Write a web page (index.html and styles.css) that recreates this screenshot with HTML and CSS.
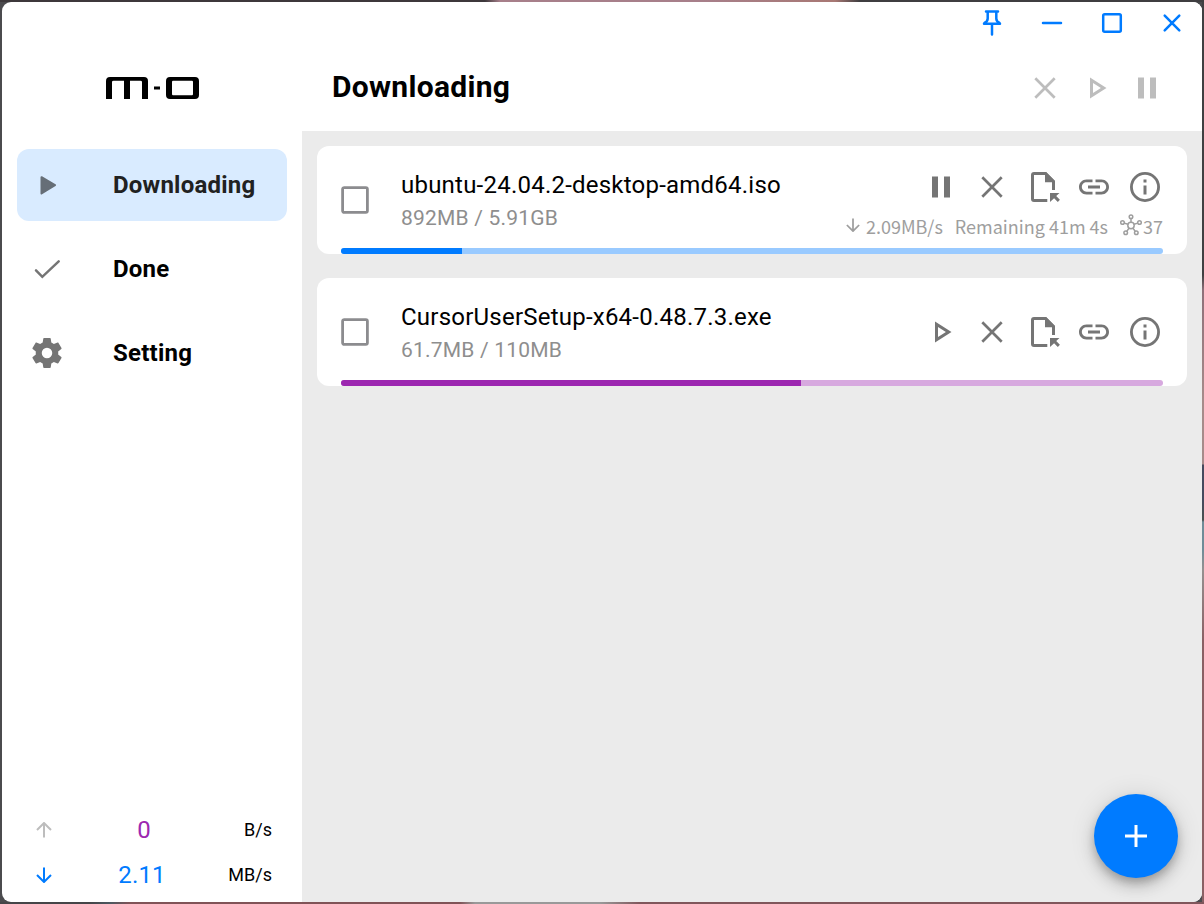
FILE: index.html
```
<!DOCTYPE html>
<html lang="en">
<head>
<meta charset="utf-8">
<title>m-o</title>
<link rel="stylesheet" href="styles.css">
</head>
<body>
<svg class="defs" aria-hidden="true">
  <symbol id="close" viewBox="0 0 36 36"><path d="M8.3 8.3 27.7 27.7M27.7 8.3 8.3 27.7" fill="none" stroke="currentColor" stroke-width="2.7"/></symbol>
  <symbol id="play" viewBox="0 0 24 24"><path d="M10 8.64 15.27 12 10 15.36V8.64M8 5v14l11-7L8 5z"/></symbol>
  <symbol id="pause" viewBox="0 0 24 24"><path d="M14 19h4V5h-4M6 19h4V5H6v14z"/></symbol>
  <symbol id="file" viewBox="0 0 36 36"><path d="M22.3 31.5H9a1.5 1.5 0 0 1-1.5-1.500V6A1.500 1.500 0 0 1 9 4.500H20.500L28.500 12.500V21" fill="none" stroke="currentColor" stroke-width="3"/><path d="M20 4v9.200h10v-1.200L21 3z"/><path d="M25 24h9.500l-3.300 3.100 3.700 3.700-2.100 2.100-3.700-3.700L25 33z"/></symbol>
  <symbol id="link" viewBox="0 0 24 24"><path d="M3.9 12c0-1.71 1.39-3.1 3.1-3.1h4V7H7c-2.760 0-5 2.240-5 5s2.240 5 5 5h4v-1.900H7c-1.710 0-3.100-1.390-3.100-3.100zM8 13h8v-2H8v2zm9-6h-4v1.900h4c1.710 0 3.100 1.390 3.100 3.100s-1.390 3.100-3.100 3.100h-4V17h4c2.760 0 5-2.240 5-5s-2.240-5-5-5z"/></symbol>
  <symbol id="info" viewBox="0 0 24 24"><circle cx="12" cy="12" r="9.050" fill="none" stroke="currentColor" stroke-width="1.900"/><path d="M11 7h2v2h-2zM11 11h2v6h-2z"/></symbol>
  <symbol id="down" viewBox="0 0 16 16"><path d="M8 .5v14M1 8l7 7 7-7" fill="none" stroke="currentColor" stroke-width="2"/></symbol>
</svg>
<div class="window">
  <aside class="sidebar">
    <div class="brand">
      <svg class="logo" viewBox="0 0 94 22"><path d="M0 22V4Q0 0 4 0H38Q42 0 42 4V22H36V5Q36 3.800 34.500 3.800H24V22H18V3.800H7.500Q6 3.800 6 5V22z"/><path d="M48 9.500h6v3h-6z"/><path fill-rule="evenodd" d="M64 0H89Q93 0 93 4V18Q93 22 89 22H64Q60 22 60 18V4Q60 0 64 0M67 3.800Q66 3.800 66 5V17Q66 18.200 67 18.200H86Q87 18.200 87 17V5Q87 3.800 86 3.800z"/></svg>
    </div>
    <nav class="nav">
      <a class="nav-item active"><svg class="nav-icon" viewBox="0 0 36 36"><path d="M12.500 10.200 26 18.200 12.500 26.500z" fill="currentColor" stroke="currentColor" stroke-width="2" stroke-linejoin="round"/></svg><span>Downloading</span></a>
      <a class="nav-item"><svg class="nav-icon" viewBox="0 0 36 36"><path d="M7 19.300 13.300 25.800 29.700 10.300" fill="none" stroke="currentColor" stroke-width="2.500" stroke-linecap="round"/></svg><span>Done</span></a>
      <a class="nav-item"><svg class="nav-icon" viewBox="0 0 24 24"><path d="M12 15.500A3.500 3.500 0 0 1 8.500 12 3.500 3.500 0 0 1 12 8.500a3.500 3.500 0 0 1 3.500 3.500 3.500 3.500 0 0 1-3.500 3.500m7.430-2.530c.04-.32.07-.64.07-.97s-.03-.66-.07-1l2.110-1.630c.19-.15.24-.42.12-.64l-2-3.460c-.12-.22-.39-.31-.61-.22l-2.490 1c-.52-.39-1.060-.73-1.690-.98l-.37-2.650A.506.506 0 0 0 14 2h-4c-.25 0-.46.18-.5.42l-.37 2.650c-.63.25-1.170.59-1.690.98l-2.490-1c-.22-.09-.49 0-.61.22l-2 3.460c-.13.22-.07.49.12.64L4.570 11c-.04.34-.07.67-.07 1s.03.65.07.97l-2.110 1.660c-.19.15-.25.42-.12.640l2 3.460c.12.22.39.30.61.22l2.490-1.010c.52.40 1.060.74 1.690.99l.37 2.650c.04.24.25.42.5.42h4c.25 0 .46-.18.5-.42l.37-2.650c.63-.26 1.170-.59 1.690-.99l2.490 1.010c.22.08.49 0 .61-.22l2-3.460c.12-.22.07-.49-.12-.640z"/></svg><span>Setting</span></a>
    </nav>
    <div class="speeds">
      <div class="speed up"><svg class="arrow flip"><use href="#down"/></svg><b>0</b><span>B/s</span></div>
      <div class="speed down"><svg class="arrow"><use href="#down"/></svg><b>2.11</b><span>MB/s</span></div>
    </div>
  </aside>
  <main class="main">
    <header class="header">
      <div class="controls">
        <svg viewBox="0 0 36 36"><path d="M12 7.400h12M13.700 7.400V14.500q0 3-3.200 4.500M22.300 7.400V14.500q0 3 3.200 4.500M10 19.700h16M18 19.700v10.800"/></svg>
        <svg viewBox="0 0 36 36"><path d="M9 19h18"/></svg>
        <svg viewBox="0 0 36 36"><rect x="9.200" y="10.200" width="17.600" height="17.600" rx="1.500"/></svg>
        <svg viewBox="0 0 36 36"><path d="m10.700 11.700 14.600 14.600m0-14.600-14.600 14.600"/></svg>
      </div>
      <div class="heading">
        <h1>Downloading</h1>
        <div class="actions muted"><svg><use href="#close"/></svg><svg><use href="#play"/></svg><svg><use href="#pause"/></svg></div>
      </div>
    </header>
    <section class="list">
      <article class="card">
        <svg class="check" viewBox="0 0 28 28"><rect x="1.600" y="1.600" width="24.800" height="24.800" rx="1.600"/></svg>
        <div class="text"><div class="name">ubuntu-24.04.2-desktop-amd64.iso</div><div class="size">892MB / 5.91GB</div></div>
        <div class="side with-status">
          <div class="actions"><svg><use href="#pause"/></svg><svg><use href="#close"/></svg><svg><use href="#file"/></svg><svg><use href="#link"/></svg><svg><use href="#info"/></svg></div>
          <div class="status"><svg class="tiny"><use href="#down"/></svg><span class="rate">2.09MB/s</span><span class="remain">Remaining 41m 4s</span><svg class="peers" viewBox="0 0 22 22"><g fill="none" stroke="currentColor" stroke-width="1.500"><circle cx="11" cy="11.500" r="3.200"/><circle cx="11" cy="2.700" r="1.800"/><circle cx="2.500" cy="8.500" r="1.800"/><circle cx="19.500" cy="8.500" r="1.800"/><circle cx="5.700" cy="18.800" r="1.800"/><circle cx="16.300" cy="18.800" r="1.800"/><path d="M11 4.500v3.800M4.300 9.100l3.600 1.200M17.700 9.100l-3.600 1.200M6.800 17.300l2.300-3.200M15.200 17.300l-2.300-3.200"/></g></svg><span>37</span></div>
        </div>
        <div class="progress blue"><i style="width:14.72%"></i></div>
      </article>
      <article class="card">
        <svg class="check" viewBox="0 0 28 28"><rect x="1.600" y="1.600" width="24.800" height="24.800" rx="1.600"/></svg>
        <div class="text"><div class="name">CursorUserSetup-x64-0.48.7.3.exe</div><div class="size">61.7MB / 110MB</div></div>
        <div class="side">
          <div class="actions"><svg><use href="#play"/></svg><svg><use href="#close"/></svg><svg><use href="#file"/></svg><svg><use href="#link"/></svg><svg><use href="#info"/></svg></div>
        </div>
        <div class="progress purple"><i style="width:55.96%"></i></div>
      </article>
    </section>
    <button class="fab" aria-label="Add"><svg viewBox="0 0 22 22"><path d="M11 0v22M0 11h22" stroke="#fff" stroke-width="3"/></svg></button>
  </main>
</div>
</body>
</html>
```
FILE: styles.css
```
* { box-sizing: border-box; }
body {
  margin: 0;
  width: 1204px;
  height: 904px;
  padding: 2px;
  overflow: hidden;
  font-family: Roboto, sans-serif;
  color: #000;
  background:
    linear-gradient(90deg, #3d383b 0 485px, #a77f8a 500px 700px, #a87874 835px, #3f3e40 860px) top / 100% 2px no-repeat,
    linear-gradient(90deg, #454548 0 90px, #4c5860 110px, #805357 130px 460px, #999 475px 600px, #80565b 640px) bottom / 100% 2px no-repeat,
    linear-gradient(#404042 0 275px, #8e7079 290px, #a68b8a 400px 464px, #454a5e 465px 500px, #4a504f 520px, #6f8c98 522px 550px, #959090 570px, #8a6064 640px) right / 2px 100% no-repeat,
    #4b4b4e;
}
svg { display: block; fill: currentColor; flex: none; }
.defs { display: none; }
.window { display: flex; width: 1200px; height: 900px; border-radius: 9px; overflow: hidden; background: #fff; }
.sidebar { display: flex; flex-direction: column; width: 300px; padding: 0 15px; }
.brand { display: flex; justify-content: center; align-items: center; height: 147px; padding-top: 25px; }
.logo { width: 94px; height: 22px; margin-left: 2px; }
.nav { display: flex; flex-direction: column; gap: 12px; }
.nav-item { display: flex; align-items: center; gap: 48px; height: 72px; padding-left: 12px; border-radius: 12px; font-size: 24px; font-weight: 700; letter-spacing: .009375em; }
.nav-item.active { background: #d9ebff; color: #212121; }
.nav-icon { width: 36px; height: 36px; color: #757575; }
.active .nav-icon { color: #666e77; }
.speeds { margin-top: auto; padding: 0 15px 5px 19px; }
.speed { display: flex; align-items: center; height: 45px; }
.speed b { width: 92px; font-size: 24px; font-weight: 400; text-align: center; }
.speed span { margin-left: auto; font-size: 18px; }
.arrow { width: 16px; height: 16px; }
.flip { transform: rotate(180deg); }
.up .arrow { color: #bdbdbd; }
.up b { margin-left: 46px; color: #9c27b0; }
.down b { margin-left: 44px; letter-spacing: .2px; }
.down .arrow, .down b { color: #007bff; }
.main { position: relative; flex: 1; background: #ebebeb; }
.header { height: 129px; background: #fff; }
.controls { display: flex; justify-content: flex-end; gap: 24px; height: 42px; padding: 2px 12px 0 0; }
.controls svg { width: 36px; height: 36px; fill: none; stroke: #007bff; stroke-width: 2.5; stroke-linecap: round; }
.heading { display: flex; justify-content: space-between; align-items: center; height: 88px; padding: 0 37px 0 30px; }
h1 { margin: 0 0 2px; font-size: 30px; line-height: 36px; font-weight: 700; letter-spacing: .3px; }
.actions { display: flex; gap: 15px; color: #757575; }
.actions svg { width: 36px; height: 36px; }
.muted { color: #bdbdbd; }
.list { display: flex; flex-direction: column; gap: 24px; padding: 15px; }
.card { position: relative; display: flex; align-items: center; height: 108px; padding: 0 24px; border-radius: 12px; background: #fff; overflow: hidden; }
.check { width: 28px; height: 28px; fill: none; stroke: #8c8c8f; stroke-width: 2.800; }
.text { margin: 0 auto 0 32px; white-space: nowrap; }
.name { font-size: 24px; line-height: 36px; letter-spacing: .009375em; }
.size { font-size: 21px; line-height: 30px; letter-spacing: .2px; color: #8e8e8e; }
.side { display: flex; flex-direction: column; align-items: flex-end; gap: 6px; }
.with-status { padding-top: 10px; }
.status { display: flex; align-items: center; height: 30px; font: 18px/30px "Noto Sans CJK SC", sans-serif; color: #9e9e9e; white-space: nowrap; }
.tiny { width: 14px; height: 14px; margin: 0 6px 3px 0; }
.rate { margin-right: 12px; }
.remain { margin-right: 12px; }
.peers { width: 22px; height: 22px; margin: 0 1px 2px 0; }
.progress { position: absolute; left: 24px; right: 24px; bottom: 0; height: 6px; border-radius: 3px; overflow: hidden; }
.progress i { display: block; height: 100%; }
.blue { background: #99caff; }
.blue i { background: #007bff; }
.purple { background: #d7a9df; }
.purple i { background: #9c27b0; }
.fab { position: absolute; right: 24px; bottom: 24px; display: grid; place-items: center; width: 84px; height: 84px; padding: 0; border: 0; border-radius: 50%; background: #007bff; box-shadow: 0 5px 8px -1px rgba(0,0,0,.2), 0 9px 15px rgba(0,0,0,.14), 0 2px 27px rgba(0,0,0,.12); }
.fab svg { width: 22px; height: 22px; }
```
